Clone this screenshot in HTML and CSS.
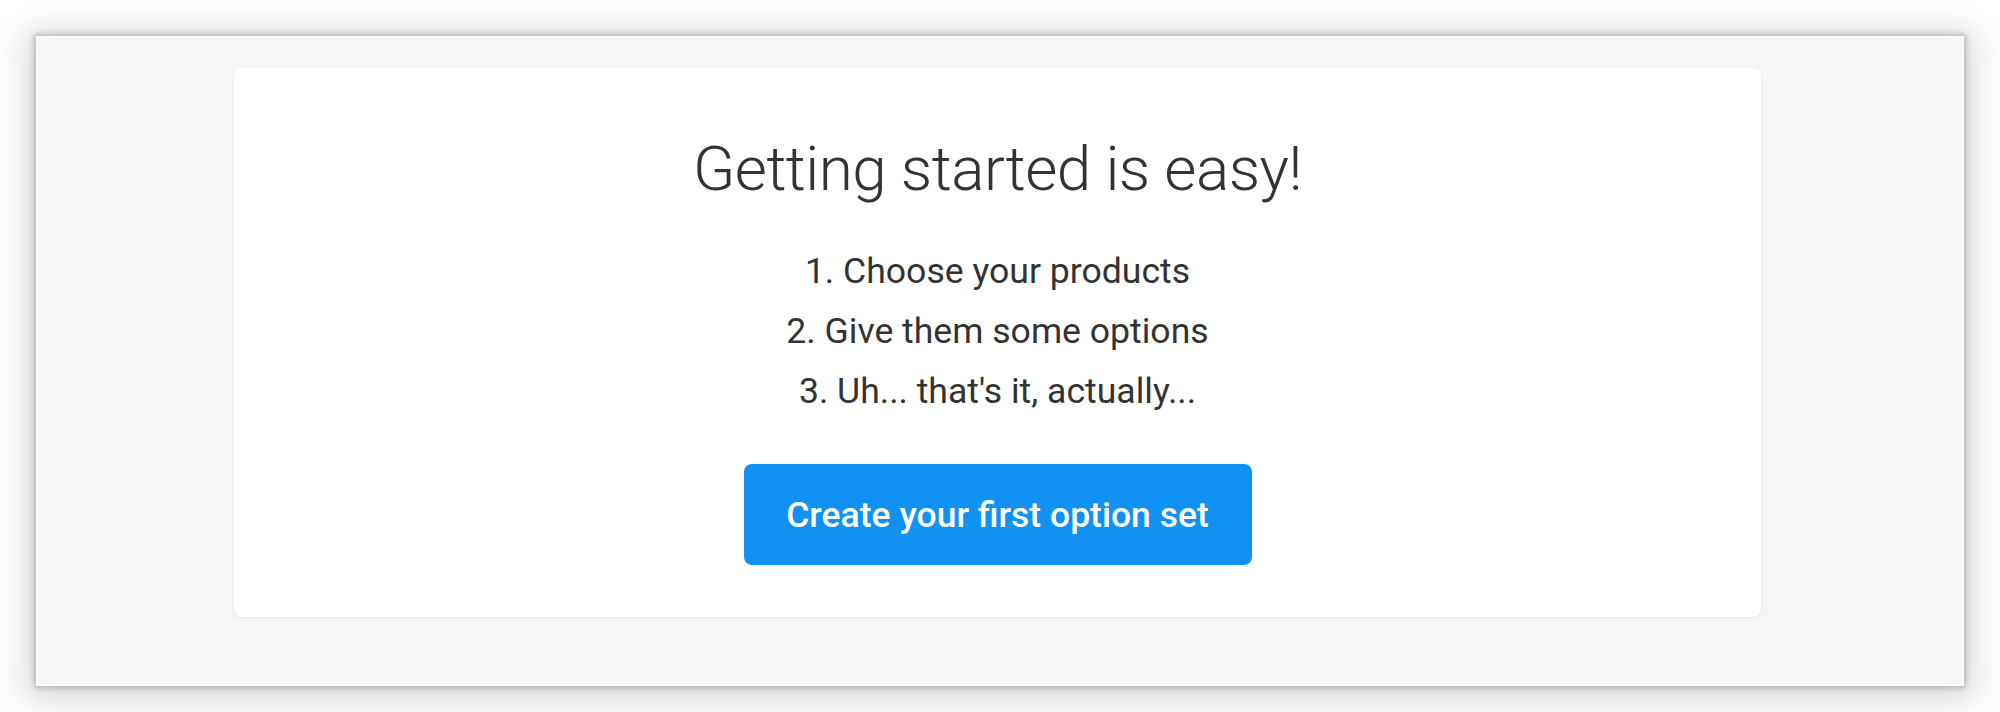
FILE: index.html
```html
<!DOCTYPE html>
<html lang="en">
<head>
<meta charset="utf-8">
<title>Getting started</title>
<link rel="stylesheet" href="styles.css">
</head>
<body>
  <div class="frame">
    <div class="card">
      <h1 class="title">Getting started is easy!</h1>
      <ol class="steps">
        <li>1. Choose your products</li>
        <li>2. Give them some options</li>
        <li>3. Uh... that's it, actually...</li>
      </ol>
      <button class="cta" type="button">Create your first option set</button>
    </div>
  </div>
</body>
</html>
```

FILE: styles.css
```css
html, body {
  margin: 0;
  padding: 0;
  background: #ffffff;
}

body {
  width: 2000px;
  height: 712px;
  overflow: hidden;
  font-family: Roboto, "Liberation Sans", sans-serif;
}

.frame {
  box-sizing: border-box;
  margin: 36px 0 0 36px;
  width: 1928px;
  height: 650px;
  background: #f5f7f7;
  border: 2px solid #fbfcfc;
  box-shadow: 0 0 5px 2px rgba(0, 0, 0, 0.2), 0 4px 30px 10px rgba(0, 0, 0, 0.16);
  padding: 30px 0 0 196px;
}

.card {
  box-sizing: border-box;
  width: 1527px;
  height: 549px;
  background: #ffffff;
  border-radius: 8px;
  box-shadow: 0 1px 3px rgba(0, 0, 0, 0.08);
  display: flex;
  flex-direction: column;
  align-items: center;
  padding-top: 64px;
}

.title {
  margin: 0;
  font-weight: 300;
  font-size: 62px;
  line-height: 74px;
  letter-spacing: -0.5px;
  color: #333333;
}

.steps {
  list-style: none;
  margin: 35px 0 0;
  padding: 0;
  text-align: center;
  font-size: 35.6px;
  line-height: 60px;
  color: #333333;
}

.cta {
  margin-top: 43px;
  width: 508px;
  height: 101px;
  border: none;
  border-radius: 8px;
  background: #1191f1;
  color: #ffffff;
  font-family: Roboto, "Liberation Sans", sans-serif;
  font-weight: 500;
  font-size: 35.5px;
  padding: 0;
}
```
